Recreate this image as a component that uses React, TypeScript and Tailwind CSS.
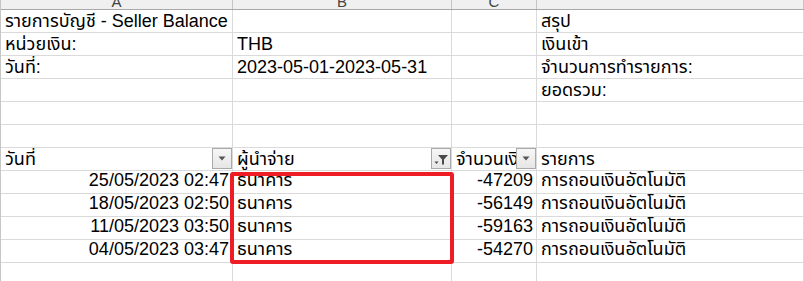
import React from "react";

type Row = {
  cells: (string | null)[];
  kind?: "info" | "head" | "data";
};

// column widths: A, B, C (D fills the rest)
const widths = ["w-[232px]", "w-[219px]", "w-[85px]", "flex-1"];

const rows: Row[] = [
  { cells: ["รายการบัญชี - Seller Balance", null, null, "สรุป"] },
  { cells: ["หน่วยเงิน:", "THB", null, "เงินเข้า"] },
  { cells: ["วันที่:", "2023-05-01-2023-05-31", null, "จำนวนการทำรายการ:"] },
  { cells: [null, null, null, "ยอดรวม:"] },
  { cells: [null, null, null, null] },
  { cells: [null, null, null, null] },
  { cells: ["วันที่", "ผู้นำจ่าย", "จำนวนเงิน", "รายการ"], kind: "head" },
  { cells: ["25/05/2023 02:47", "ธนาคาร", "-47209", "การถอนเงินอัตโนมัติ"], kind: "data" },
  { cells: ["18/05/2023 02:50", "ธนาคาร", "-56149", "การถอนเงินอัตโนมัติ"], kind: "data" },
  { cells: ["11/05/2023 03:50", "ธนาคาร", "-59163", "การถอนเงินอัตโนมัติ"], kind: "data" },
  { cells: ["04/05/2023 03:47", "ธนาคาร", "-54270", "การถอนเงินอัตโนมัติ"], kind: "data" },
  { cells: [null, null, null, null] },
];

function FilterButton({ active }: { active?: boolean }) {
  return (
    <div className="absolute right-0 top-0 w-[20px] h-[21px] border border-[#a9a9a9] bg-gradient-to-b from-[#f7f7f7] to-[#e6e6e6] flex items-center justify-center">
      {active ? (
        // funnel with a small sort arrow beside it
        <svg width="18" height="19" viewBox="0 0 18 19">
          <path d="M6 6h10l-4 4.5v5h-2v-5z" fill="#4a4a4a" />
          <path d="M2.5 12.5h4l-2 2.5z" fill="#4a4a4a" />
        </svg>
      ) : (
        <svg width="8" height="5" viewBox="0 0 8 5">
          <path d="M0.5 0.5h7L4 4.5z" fill="#555" />
        </svg>
      )}
    </div>
  );
}

function Cell({ text, col, kind }: { text: string | null; col: number; kind?: Row["kind"] }) {
  const numeric = kind === "data" && (col === 0 || col === 2);
  const pad = kind === "data" ? "pb-[2px]" : "";
  return (
    <div
      className={`${widths[col]} relative h-full border-r border-[#dadada] overflow-hidden flex items-end ${pad} ${
        numeric ? "justify-end pr-[3px]" : "pl-[4px]"
      }`}
    >
      {text && <span className="whitespace-nowrap leading-[22px]">{text}</span>}
      {kind === "head" && col < 3 && <FilterButton active={col === 1} />}
    </div>
  );
}

export default function App() {
  return (
    <div
      className="relative w-[804px] h-[281px] overflow-hidden bg-white text-black text-[18px]"
      style={{ fontFamily: '"Liberation Sans", "Noto Sans Thai", "Noto Sans", sans-serif' }}
    >
      <div className="border-l border-[#c6c6c6]">
        {/* column letters, scrolled so only their lower half shows */}
        <div className="flex h-[10px] bg-[#f0f0f0] border-b border-[#a8a8a8] text-[#444] text-[15px]">
          {["A", "B", "C", ""].map((l, i) => (
            <div
              key={i}
              className={`${widths[i]} h-full border-r border-[#c6c6c6] flex items-end justify-center overflow-hidden`}
            >
              <span className="leading-none">{l}</span>
            </div>
          ))}
        </div>

        {rows.map((r, i) => (
          <div key={i} className="flex h-[23px] border-b border-[#dadada]">
            {r.cells.map((c, j) => (
              <Cell key={j} text={c} col={j} kind={r.kind} />
            ))}
          </div>
        ))}
      </div>

      {/* highlight box around the payer column */}
      <div className="absolute left-[230px] top-[172px] w-[224px] h-[92px] border-[4px] border-[#ee1c25] rounded-[3px]" />
    </div>
  );
}
